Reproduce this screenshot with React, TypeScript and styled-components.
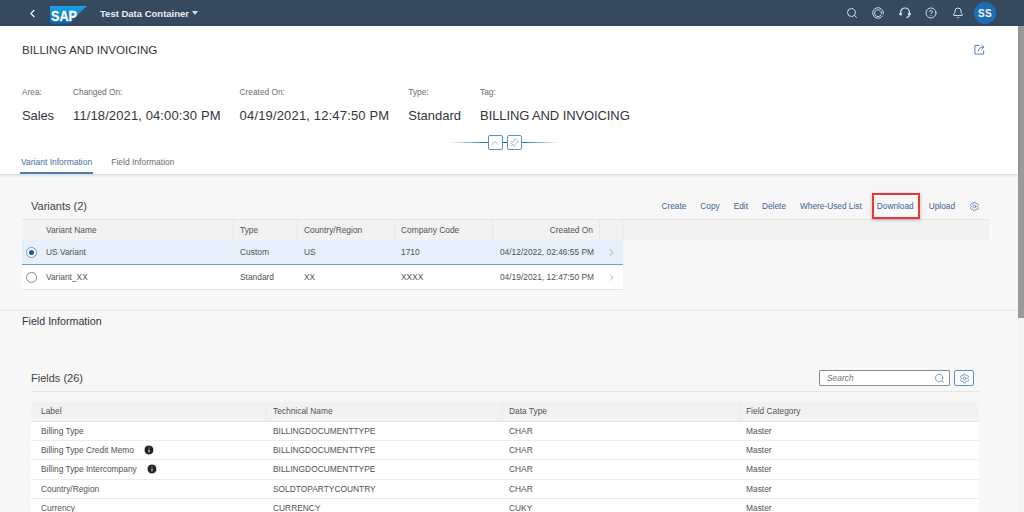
import { createGlobalStyle, styled } from "styled-components";
import { Bell, ChevronLeft, ChevronRight, ChevronUp, CircleHelp, Info, Pin, Search, Settings } from "lucide-react";

const GlobalStyle = createGlobalStyle`
  html, body {
    margin: 0;
    height: 100%;
    overflow: hidden;
  }
  body {
    font-family: "Liberation Sans", Arial, sans-serif;
    color: #32363a;
    background: #f7f7f7;
  }
  #root {
    height: 100%;
  }
`;

const Page = styled.div`
  display: flex;
  flex-direction: column;
  height: 512px;
  overflow: hidden;
`;

const ShellBar = styled.header`
  display: flex;
  align-items: center;
  height: 26px;
  flex: none;
  background: #354a5f;
  color: #fff;
  padding: 0 28px 0 26px;
`;

const BackButton = styled.span`
  display: flex;
  width: 24px;
  color: #fff;
`;

const Logo = styled.svg`
  width: 37px;
  height: 18px;
  margin: 4px 13px 0 0;
`;

const ShellTitle = styled.div`
  font-size: 9.5px;
  font-weight: 700;
  flex: 1;
  display: flex;
  align-items: center;
  gap: 3px;
  color: #e9edf1;
`;

const Caret = styled.span`
  width: 0;
  height: 0;
  border-left: 3.5px solid transparent;
  border-right: 3.5px solid transparent;
  border-top: 4px solid #d5dde5;
`;

const ShellIcons = styled.div`
  display: flex;
  align-items: center;
  gap: 14.5px;
  color: #d3dce5;
`;

const ShellIcon = styled.span`
  display: flex;
  width: 12px;
  height: 12px;
`;

const Avatar = styled.span`
  width: 22px;
  height: 22px;
  margin-left: -4px;
  border-radius: 50%;
  background: #1f6db3;
  color: #f2f6fa;
  font-size: 10px;
  font-weight: 700;
  letter-spacing: 0.3px;
  display: flex;
  align-items: center;
  justify-content: center;
`;

const Body = styled.div`
  flex: 1;
  min-height: 0;
  display: flex;
`;

const Content = styled.main`
  flex: 1;
  min-width: 0;
`;

const Scrollbar = styled.div`
  width: 6px;
  flex: none;
  background: #f4f4f4;
`;

const ScrollThumb = styled.div`
  height: 292px;
  background: #9a9a9a;
`;

const ObjectHeader = styled.section`
  position: relative;
  height: 148px;
  background: #fff;
  box-shadow: 0 1px 3px rgba(0, 0, 0, 0.16);
`;

const TitleRow = styled.div`
  display: flex;
  align-items: center;
  justify-content: space-between;
  box-sizing: border-box;
  height: 48px;
  padding: 0 33px 1px 22px;
`;

const PageTitle = styled.h1`
  margin: 0;
  font-size: 11.6px;
  font-weight: 400;
`;

const ShareIcon = styled.svg`
  width: 11px;
  height: 11px;
  color: #3f78b5;
`;

const MetaRow = styled.div`
  display: flex;
  gap: 19px;
  margin: 11px 0 0 22px;
`;

const MetaItem = styled.div`
  display: flex;
  flex-direction: column;
  gap: 7px;
`;

const MetaLabel = styled.span`
  font-size: 8.3px;
  line-height: 14px;
  color: #6a6d70;
`;

const MetaValue = styled.span<{ $tracking: number }>`
  font-size: 13px;
  line-height: 20px;
  letter-spacing: ${({ $tracking }) => $tracking}px;
  white-space: nowrap;
`;

const CollapseBar = styled.div`
  display: flex;
  align-items: center;
  justify-content: center;
  width: 109px;
  height: 15px;
  margin: 9px 0 0 450px;
`;

const CollapseLine = styled.span<{ $side: "left" | "right" }>`
  flex: 1;
  height: 1px;
  background: linear-gradient(
    ${({ $side }) => ($side === "left" ? "to right" : "to left")},
    rgba(10, 110, 209, 0),
    #1a6bb5
  );
`;

const CollapseButton = styled.span`
  width: 15px;
  height: 15px;
  box-sizing: border-box;
  display: flex;
  align-items: center;
  justify-content: center;
  background: #fff;
  border: 1px solid #5a8fc4;
  border-radius: 2px;
  color: #5f7f9f;
`;

const CollapseGap = styled.span`
  width: 4px;
  height: 1px;
  background: #1a6bb5;
`;

const TiltedPin = styled(Pin)`
  transform: rotate(45deg);
`;

const Tabs = styled.nav`
  display: flex;
  gap: 17px;
  height: 24px;
  padding-left: 20px;
`;

const Tab = styled.span<{ $active?: boolean }>`
  box-sizing: border-box;
  height: 24px;
  padding: 6.5px 1px 0;
  font-size: 8.5px;
  line-height: 11px;
  color: ${({ $active }) => ($active ? "#3f6f9f" : "#6a6d70")};
  border-bottom: 2px solid ${({ $active }) => ($active ? "#4a7fb5" : "transparent")};
`;

const VariantsSection = styled.section`
  box-sizing: border-box;
  height: 137px;
  padding: 19px 29px 0 22px;
  border-bottom: 2px solid #ececec;
`;

const Toolbar = styled.div`
  display: flex;
  align-items: center;
  justify-content: space-between;
  height: 26px;
  padding-left: 9px;
`;

const SectionTitle = styled.h2`
  margin: 0;
  font-size: 11px;
  font-weight: 400;
  color: #3f4347;
`;

const Actions = styled.div`
  display: flex;
  align-items: center;
  color: #3d6594;
`;

const ActionButton = styled.span<{ $highlight?: boolean }>`
  box-sizing: border-box;
  display: flex;
  align-items: center;
  height: 26px;
  padding: 0 ${({ $highlight }) => ($highlight ? "4px 0 3px" : "0")};
  margin-left: ${({ $highlight }) => ($highlight ? "8px" : "10px")};
  margin-right: ${({ $highlight }) => ($highlight ? "-3px" : "0")};
  font-size: 8.3px;
  white-space: nowrap;
  border: 2px solid ${({ $highlight }) => ($highlight ? "#e2393b" : "transparent")};
  box-shadow: ${({ $highlight }) => ($highlight ? "0 1px 3px rgba(0, 0, 0, 0.3)" : "none")};
`;

const GearSlot = styled.span`
  display: flex;
  margin: 0 9px 0 12px;
  color: #3d6594;
`;

const VariantHead = styled.div`
  display: grid;
  grid-template-columns: 18px 194px 64px 97px 98px 107px 23px 1fr;
  height: 21px;
  background: #f2f2f2;
  border-top: 1px solid #e5e5e5;
  box-sizing: border-box;
`;

const HeadCell = styled.div<{ $right?: boolean; $divider?: boolean }>`
  display: flex;
  align-items: center;
  justify-content: ${({ $right }) => ($right ? "flex-end" : "flex-start")};
  padding: 0 6px;
  font-size: 8.4px;
  color: #4f5356;
  white-space: nowrap;
  border-right: ${({ $divider }) => ($divider ? "1px solid #e8e8e8" : "none")};
`;

const VariantRow = styled.div<{ $selected?: boolean }>`
  display: grid;
  grid-template-columns: 18px 194px 64px 97px 98px 107px 23px;
  box-sizing: border-box;
  width: 601px;
  height: 25px;
  background: ${({ $selected }) => ($selected ? "#e5f0fa" : "#fff")};
  border-bottom: 1px solid ${({ $selected }) => ($selected ? "#6b9fd1" : "#e5e5e5")};
`;

const Cell = styled.div<{ $right?: boolean }>`
  display: flex;
  align-items: center;
  justify-content: ${({ $right }) => ($right ? "flex-end" : "flex-start")};
  padding: 0 6px;
  font-size: 8.4px;
  color: #4f5356;
  white-space: nowrap;
  overflow: hidden;
`;

const RadioCell = styled.div`
  display: flex;
  align-items: center;
  justify-content: center;
`;

const Radio = styled.span<{ $checked?: boolean }>`
  width: 11px;
  height: 11px;
  box-sizing: border-box;
  display: flex;
  align-items: center;
  justify-content: center;
  border-radius: 50%;
  background: #fff;
  border: 1px solid #8a8d90;
  &::after {
    content: "";
    width: 5px;
    height: 5px;
    border-radius: 50%;
    background: ${({ $checked }) => ($checked ? "#0a5cad" : "transparent")};
  }
`;

const ArrowCell = styled.div`
  display: flex;
  align-items: center;
  justify-content: center;
  color: #6f7275;
`;

const FieldSection = styled.section`
  padding: 3px 0 0 22px;
`;

const FieldHeading = styled.h2`
  margin: 0;
  height: 14px;
  line-height: 14px;
  font-size: 10.7px;
  font-weight: 400;
`;

const FieldPanel = styled.div`
  margin: 37px 39px 0 9px;
`;

const FieldToolbar = styled.div`
  display: flex;
  align-items: center;
  justify-content: space-between;
  box-sizing: border-box;
  height: 27px;
  border-bottom: 1px solid #e5e5e5;
  margin-bottom: 10px;
`;

const FieldTools = styled.div`
  display: flex;
  align-items: center;
  gap: 4px;
  margin-right: 5px;
`;

const SearchBox = styled.div`
  box-sizing: border-box;
  display: flex;
  align-items: center;
  justify-content: space-between;
  width: 131px;
  height: 16px;
  padding: 0 4px 0 7px;
  background: #fff;
  border: 1px solid #8a8d90;
  border-radius: 1px;
  font-size: 8.4px;
  font-style: italic;
  color: #74777a;
`;

const SearchGlass = styled.span`
  display: flex;
  color: #3f6f9f;
`;

const GearButton = styled.span`
  box-sizing: border-box;
  width: 20px;
  height: 16px;
  display: flex;
  align-items: center;
  justify-content: center;
  border: 1px solid #5a8fc4;
  border-radius: 2px;
  background: #fbfcfd;
  color: #47709a;
`;

const FieldGrid = styled.div`
  display: grid;
  grid-template-columns: 236px 236px 237px 239px;
`;

const FieldHead = styled.div<{ $last?: boolean }>`
  display: flex;
  align-items: center;
  box-sizing: border-box;
  height: 19.5px;
  padding-left: 6px;
  font-size: 8.4px;
  color: #4f5356;
  background: #f2f2f2;
  border-bottom: 1px solid #e3e3e3;
  border-right: ${({ $last }) => ($last ? "none" : "1px solid #ebebeb")};
`;

const FieldCell = styled.div`
  display: flex;
  align-items: center;
  box-sizing: border-box;
  height: 19.4px;
  padding-left: 6px;
  font-size: 8.4px;
  color: #4f5356;
  background: #fff;
  border-bottom: 1px solid #ececec;
  white-space: nowrap;
`;

const LabelCell = styled(FieldCell)`
  padding-left: 10px;
`;

const LabelHead = styled(FieldHead)`
  padding-left: 10px;
`;

const InfoBadge = styled.span<{ $gap: number }>`
  display: flex;
  margin-left: ${({ $gap }) => $gap}px;
  color: #1f2328;
`;

const HeadsetIcon = () => (
  <svg viewBox="0 0 12 12" width="12" height="12" fill="none" stroke="currentColor" strokeWidth="1.2">
    <path d="M1.6 7V5.4a4.4 4.4 0 0 1 8.8 0V7" />
    <path d="M10.4 7.4c0 1.8-1 2.9-3 3" />
    <circle cx="1.6" cy="7" r="0.9" fill="currentColor" />
    <circle cx="10.4" cy="7" r="0.9" fill="currentColor" />
  </svg>
);

const RingIcon = () => (
  <svg viewBox="0 0 12 12" width="12" height="12" fill="none" stroke="currentColor" strokeWidth="1">
    <path d="M10.6 8.6A5.3 5.3 0 1 1 11.3 6v1.4" />
    <path d="M8.9 8A3.4 3.4 0 1 1 9.4 6v1.2" />
  </svg>
);

const variants = [
  { name: "US Variant", type: "Custom", country: "US", code: "1710", created: "04/12/2022, 02:46:55 PM", selected: true },
  { name: "Variant_XX", type: "Standard", country: "XX", code: "XXXX", created: "04/19/2021, 12:47:50 PM", selected: false },
];

const fields = [
  { label: "Billing Type", tech: "BILLINGDOCUMENTTYPE", data: "CHAR" },
  { label: "Billing Type Credit Memo", tech: "BILLINGDOCUMENTTYPE", data: "CHAR", info: 9 },
  { label: "Billing Type Intercompany", tech: "BILLINGDOCUMENTTYPE", data: "CHAR", info: 9 },
  { label: "Country/Region", tech: "SOLDTOPARTYCOUNTRY", data: "CHAR" },
  { label: "Currency", tech: "CURRENCY", data: "CUKY" },
];

const meta = [
  { label: "Area:", value: "Sales", tracking: -0.1 },
  { label: "Changed On:", value: "11/18/2021, 04:00:30 PM", tracking: 0.11 },
  { label: "Created On:", value: "04/19/2021, 12:47:50 PM", tracking: 0.16 },
  { label: "Type:", value: "Standard", tracking: 0 },
  { label: "Tag:", value: "BILLING AND INVOICING", tracking: -0.1 },
];

export default function App() {
  return (
    <Page>
      <GlobalStyle />
      <ShellBar>
        <BackButton>
          <ChevronLeft size={13} strokeWidth={2} />
        </BackButton>
        <Logo viewBox="0 0 37 18">
          <defs>
            <linearGradient id="sapBlue" x1="0" y1="0" x2="0" y2="1">
              <stop offset="0" stopColor="#17a5e6" />
              <stop offset="1" stopColor="#0a5fb0" />
            </linearGradient>
          </defs>
          <polygon points="0,0 37,0 18,18 0,18" fill="url(#sapBlue)" />
          <text
            x="1"
            y="14.5"
            fontFamily="Liberation Sans"
            fontSize="15"
            fontWeight="700"
            fill="#fff"
            stroke="#fff"
            strokeWidth="0.3"
            textLength="26"
            lengthAdjust="spacingAndGlyphs"
          >
            SAP
          </text>
        </Logo>
        <ShellTitle>
          Test Data Container
          <Caret />
        </ShellTitle>
        <ShellIcons>
          <ShellIcon>
            <Search size={12} />
          </ShellIcon>
          <ShellIcon>
            <RingIcon />
          </ShellIcon>
          <ShellIcon>
            <HeadsetIcon />
          </ShellIcon>
          <ShellIcon>
            <CircleHelp size={12} />
          </ShellIcon>
          <ShellIcon>
            <Bell size={12} />
          </ShellIcon>
          <Avatar>SS</Avatar>
        </ShellIcons>
      </ShellBar>

      <Body>
        <Content>
          <ObjectHeader>
            <TitleRow>
              <PageTitle>BILLING AND INVOICING</PageTitle>
              <ShareIcon viewBox="0 0 12 12" fill="none" stroke="currentColor" strokeWidth="1">
                <path d="M6 1.5H1v9.5h9.5V7" />
                <path d="M4.5 8c.3-3 2.2-4.6 6-4.6" />
                <path d="M8.3 1l2.6 2.4-2.6 2.4" />
              </ShareIcon>
            </TitleRow>
            <MetaRow>
              {meta.map((item) => (
                <MetaItem key={item.label}>
                  <MetaLabel>{item.label}</MetaLabel>
                  <MetaValue $tracking={item.tracking}>{item.value}</MetaValue>
                </MetaItem>
              ))}
            </MetaRow>
            <CollapseBar>
              <CollapseLine $side="left" />
              <CollapseButton>
                <ChevronUp size={12} strokeWidth={1.2} />
              </CollapseButton>
              <CollapseGap />
              <CollapseButton>
                <TiltedPin size={10} strokeWidth={1.2} />
              </CollapseButton>
              <CollapseLine $side="right" />
            </CollapseBar>
            <Tabs>
              <Tab $active>Variant Information</Tab>
              <Tab>Field Information</Tab>
            </Tabs>
          </ObjectHeader>

          <VariantsSection>
            <Toolbar>
              <SectionTitle>Variants (2)</SectionTitle>
              <Actions>
                <ActionButton>Create</ActionButton>
                <ActionButton>Copy</ActionButton>
                <ActionButton>Edit</ActionButton>
                <ActionButton>Delete</ActionButton>
                <ActionButton>Where-Used List</ActionButton>
                <ActionButton $highlight>Download</ActionButton>
                <ActionButton>Upload</ActionButton>
                <GearSlot>
                  <Settings size={11} strokeWidth={1.3} />
                </GearSlot>
              </Actions>
            </Toolbar>
            <VariantHead>
              <HeadCell />
              <HeadCell $divider>Variant Name</HeadCell>
              <HeadCell $divider>Type</HeadCell>
              <HeadCell $divider>Country/Region</HeadCell>
              <HeadCell $divider>Company Code</HeadCell>
              <HeadCell $right $divider>
                Created On
              </HeadCell>
              <HeadCell $divider />
              <HeadCell />
            </VariantHead>
            {variants.map((row) => (
              <VariantRow key={row.name} $selected={row.selected}>
                <RadioCell>
                  <Radio $checked={row.selected} />
                </RadioCell>
                <Cell>{row.name}</Cell>
                <Cell>{row.type}</Cell>
                <Cell>{row.country}</Cell>
                <Cell>{row.code}</Cell>
                <Cell $right>{row.created}</Cell>
                <ArrowCell>
                  <ChevronRight size={11} strokeWidth={1.2} />
                </ArrowCell>
              </VariantRow>
            ))}
          </VariantsSection>

          <FieldSection>
            <FieldHeading>Field Information</FieldHeading>
            <FieldPanel>
              <FieldToolbar>
                <SectionTitle>Fields (26)</SectionTitle>
                <FieldTools>
                  <SearchBox>
                    Search
                    <SearchGlass>
                      <Search size={11} strokeWidth={1.3} />
                    </SearchGlass>
                  </SearchBox>
                  <GearButton>
                    <Settings size={11} strokeWidth={1.3} />
                  </GearButton>
                </FieldTools>
              </FieldToolbar>
              <FieldGrid>
                <LabelHead>Label</LabelHead>
                <FieldHead>Technical Name</FieldHead>
                <FieldHead>Data Type</FieldHead>
                <FieldHead $last>Field Category</FieldHead>
                {fields.map((row) => (
                  <>
                    <LabelCell key={row.label}>
                      {row.label}
                      {row.info && (
                        <InfoBadge $gap={row.info}>
                          <Info size={12} fill="currentColor" stroke="#fff" strokeWidth={2} />
                        </InfoBadge>
                      )}
                    </LabelCell>
                    <FieldCell>{row.tech}</FieldCell>
                    <FieldCell>{row.data}</FieldCell>
                    <FieldCell>Master</FieldCell>
                  </>
                ))}
              </FieldGrid>
            </FieldPanel>
          </FieldSection>
        </Content>
        <Scrollbar>
          <ScrollThumb />
        </Scrollbar>
      </Body>
    </Page>
  );
}
